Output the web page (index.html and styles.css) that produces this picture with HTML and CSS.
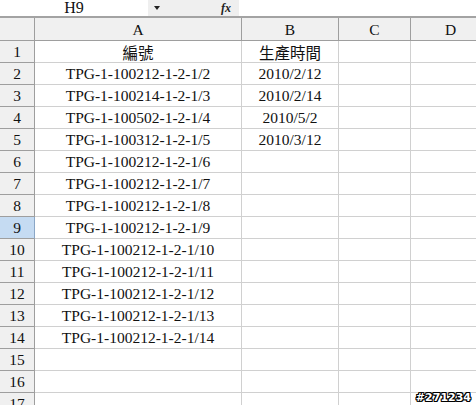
FILE: index.html
```html
<!DOCTYPE html>
<html>
<head>
<meta charset="utf-8">
<link rel="stylesheet" href="styles.css">
</head>
<body>
<div class="sheet">
  <div class="fbar">
    <div class="namebox">H9</div>
    <div class="fbtns">
      <span class="arrow"></span>
      <span class="fx">fx</span>
    </div>
    <div class="finput"></div>
  </div>
  <div class="grid">
    <div class="corner hd"></div><div class="hd col">A</div><div class="hd col">B</div><div class="hd col">C</div><div class="hd col">D</div>

    <div class="hd rh">1</div><div class="c">編號</div><div class="c">生產時間</div><div class="c"></div><div class="c"></div>
    <div class="hd rh">2</div><div class="c">TPG-1-100212-1-2-1/2</div><div class="c">2010/2/12</div><div class="c"></div><div class="c"></div>
    <div class="hd rh">3</div><div class="c">TPG-1-100214-1-2-1/3</div><div class="c">2010/2/14</div><div class="c"></div><div class="c"></div>
    <div class="hd rh">4</div><div class="c">TPG-1-100502-1-2-1/4</div><div class="c">2010/5/2</div><div class="c"></div><div class="c"></div>
    <div class="hd rh">5</div><div class="c">TPG-1-100312-1-2-1/5</div><div class="c">2010/3/12</div><div class="c"></div><div class="c"></div>
    <div class="hd rh">6</div><div class="c">TPG-1-100212-1-2-1/6</div><div class="c"></div><div class="c"></div><div class="c"></div>
    <div class="hd rh">7</div><div class="c">TPG-1-100212-1-2-1/7</div><div class="c"></div><div class="c"></div><div class="c"></div>
    <div class="hd rh">8</div><div class="c">TPG-1-100212-1-2-1/8</div><div class="c"></div><div class="c"></div><div class="c"></div>
    <div class="hd rh sel">9</div><div class="c">TPG-1-100212-1-2-1/9</div><div class="c"></div><div class="c"></div><div class="c"></div>
    <div class="hd rh">10</div><div class="c">TPG-1-100212-1-2-1/10</div><div class="c"></div><div class="c"></div><div class="c"></div>
    <div class="hd rh">11</div><div class="c">TPG-1-100212-1-2-1/11</div><div class="c"></div><div class="c"></div><div class="c"></div>
    <div class="hd rh">12</div><div class="c">TPG-1-100212-1-2-1/12</div><div class="c"></div><div class="c"></div><div class="c"></div>
    <div class="hd rh">13</div><div class="c">TPG-1-100212-1-2-1/13</div><div class="c"></div><div class="c"></div><div class="c"></div>
    <div class="hd rh">14</div><div class="c">TPG-1-100212-1-2-1/14</div><div class="c"></div><div class="c"></div><div class="c"></div>
    <div class="hd rh">15</div><div class="c"></div><div class="c"></div><div class="c"></div><div class="c"></div>
    <div class="hd rh">16</div><div class="c"></div><div class="c"></div><div class="c"></div><div class="c"></div>
    <div class="hd rh">17</div><div class="c"></div><div class="c"></div><div class="c"></div><div class="c"></div>
  </div>
  <div class="mark">#271234</div>
</div>
</body>
</html>
```
FILE: styles.css
```css
html, body {
  margin: 0;
  padding: 0;
  background: #ffffff;
  overflow: hidden;
}
.sheet {
  position: relative;
  width: 476px;
  height: 405px;
  overflow: hidden;
  font-family: "Liberation Serif", "Noto Sans CJK TC", serif;
  font-size: 15.5px;
  color: #111;
}
.fbar {
  display: flex;
  height: 16px;
  border-bottom: 2px solid #a3a3a3;
  box-sizing: content-box;
}
.namebox {
  width: 148px;
  background: #fff;
  text-align: center;
  line-height: 16px;
  font-size: 16px;
}
.fbtns {
  width: 91px;
  background: #efefef;
  display: flex;
  align-items: center;
}
.arrow {
  margin-left: 6px;
  width: 0;
  height: 0;
  border-left: 3.5px solid transparent;
  border-right: 3.5px solid transparent;
  border-top: 4px solid #222;
}
.fx {
  margin-left: auto;
  margin-right: 8px;
  font-style: italic;
  font-weight: bold;
  font-size: 12px;
  line-height: 16px;
  color: #222;
}
.finput {
  flex: 1;
  background: #fff;
}
.grid {
  display: grid;
  grid-template-columns: 35px 207px 97px 72px 80px;
  grid-template-rows: 23px repeat(17, 22px);
}
.grid > div {
  box-sizing: border-box;
  border-right: 1px solid #d0d0d0;
  border-bottom: 1px solid #d0d0d0;
  display: flex;
  align-items: center;
  justify-content: center;
  white-space: nowrap;
  overflow: hidden;
  padding-top: 1px;
}
.grid > .hd {
  background: #f0f0f0;
  border-right: 1px solid #9e9e9e;
  border-bottom: 1px solid #9e9e9e;
}
.grid > .rh.sel {
  background: #c5dbf2;
  border-right: 1px solid #8aa6c6;
}
.mark {
  position: absolute;
  right: 5px;
  bottom: 1px;
  font-family: "DejaVu Sans", sans-serif;
  font-size: 11px;
  font-weight: bold;
  color: #fff;
  text-shadow: -1px 0 #000, 1px 0 #000, 0 -1px #000, 0 1px #000, -1px -1px #000, 1px 1px #000, -1px 1px #000, 1px -1px #000;
}
```
